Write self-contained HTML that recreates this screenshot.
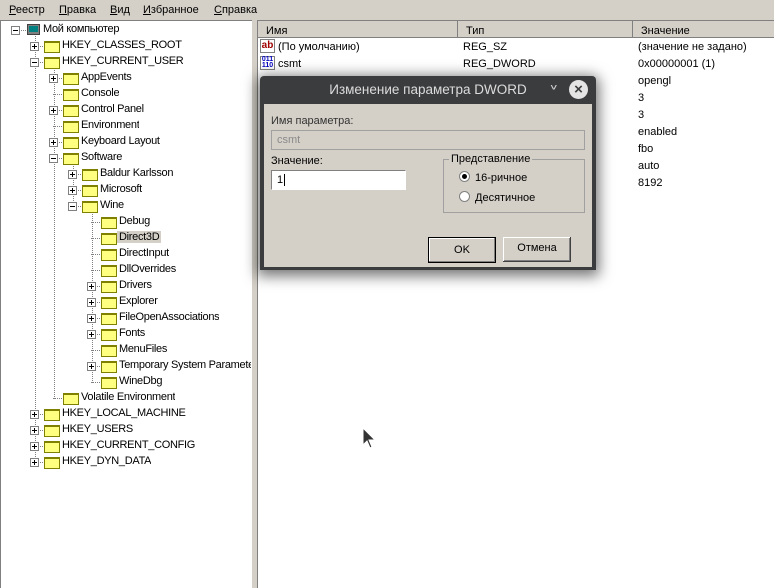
<!DOCTYPE html><html><head><meta charset="utf-8"><style>
*{margin:0;padding:0;box-sizing:border-box}
body{width:774px;height:588px;overflow:hidden;background:#d4d0c8;font-family:"Liberation Sans","DejaVu Sans",sans-serif;font-size:11px;color:#000;position:relative}
.a{position:absolute;white-space:nowrap}
.menu span{position:absolute;top:4px}
.menu u{text-decoration:underline}
#tree{position:absolute;left:0;top:20px;width:252px;height:568px;background:#fff;border-top:1px solid #808080;border-left:1px solid #808080;overflow:hidden}
#list{position:absolute;left:257px;top:20px;width:517px;height:568px;background:#fff;border-top:1px solid #808080;border-left:1px solid #808080;overflow:hidden}
.box{position:absolute;width:9px;height:9px;border:1px solid #808080;background:#fff}
.box:before{content:"";position:absolute;left:1px;top:3px;width:5px;height:1px;background:#000}
.box.p:after{content:"";position:absolute;left:3px;top:1px;width:1px;height:5px;background:#000}
.fold{position:absolute;width:16px;height:12px;background:#ffff80;border:1px solid #808000;border-top-width:2px}
.vl{position:absolute;border-left:1px dotted #808080;width:0}
.hl{position:absolute;border-top:1px dotted #808080;height:0}
.tt{font-size:11px;letter-spacing:-0.3px}
.hdr{position:absolute;top:0;height:17px;background:#d4d0c8;border-right:1px solid #808080;border-bottom:1px solid #808080;padding:4px 0 0 8px}
</style></head><body>
<div class="menu"><span style="left:9px"><u>Р</u>еестр</span><span style="left:59px"><u>П</u>равка</span><span style="left:110px"><u>В</u>ид</span><span style="left:143px"><u>И</u>збранное</span><span style="left:214px"><u>С</u>правка</span></div>
<div id="tree">
<div class="vl" style="left:34px;top:11px;height:431px"></div>
<div class="vl" style="left:53px;top:42px;height:336px"></div>
<div class="vl" style="left:72px;top:138px;height:48px"></div>
<div class="vl" style="left:91px;top:186px;height:176px"></div>
</div>
<div id="list">
<div class="hdr" style="left:0;width:200px">Имя</div>
<div class="hdr" style="left:200px;width:175px">Тип</div>
<div class="hdr" style="left:375px;width:142px">Значение</div>
</div>
<div class="a" style="left:252px;top:20px;width:5px;height:568px;background:#d4d0c8"></div>
<div id="T"></div>
<script>
var rows=[[0,'Мой компьютер','m'],[1,'HKEY_CLASSES_ROOT','p'],[1,'HKEY_CURRENT_USER','m'],[2,'AppEvents','p'],[2,'Console',''],[2,'Control Panel','p'],[2,'Environment',''],[2,'Keyboard Layout','p'],[2,'Software','m'],[3,'Baldur Karlsson','p'],[3,'Microsoft','p'],[3,'Wine','m'],[4,'Debug',''],[4,'Direct3D','s'],[4,'DirectInput',''],[4,'DllOverrides',''],[4,'Drivers','p'],[4,'Explorer','p'],[4,'FileOpenAssociations','p'],[4,'Fonts','p'],[4,'MenuFiles',''],[4,'Temporary System Parameters','p'],[4,'WineDbg',''],[2,'Volatile Environment',''],[1,'HKEY_LOCAL_MACHINE','p'],[1,'HKEY_USERS','p'],[1,'HKEY_CURRENT_CONFIG','p'],[1,'HKEY_DYN_DATA','p']];
var h='';rows.forEach(function(r,i){var y=23+i*16,L=r[0],bx=11+19*L,ix=bx+14,tx=ix+18;
if(L==0){bx=11;ix=26;tx=43;}
h+='<div class="hl" style="left:'+(bx+4)+'px;top:'+(y+7)+'px;width:11px"></div>';
if(r[2]=='p'||r[2]=='m')h+='<div class="box '+(r[2]=='p'?'p':'')+'" style="left:'+bx+'px;top:'+(y+3)+'px"></div>';
if(L==0)h+='<div class="a" style="left:27px;top:'+(y+1)+'px;width:13px;height:11px;background:#808080;border:1px solid #404040"><div style="margin:1px;height:6px;background:#008080"></div></div>';
else h+='<div class="fold" style="left:'+ix+'px;top:'+(y+2)+'px"></div>';
h+='<div class="a tt" style="left:'+tx+'px;top:'+(y)+'px;'+(r[2]=='s'?'background:#d4d0c8;padding:0 2px;margin-left:-2px;':'')+'max-width:'+(251-tx)+'px;overflow:hidden">'+r[1]+'</div>';});
var v=[['(По умолчанию)','REG_SZ','(значение не задано)'],['csmt','REG_DWORD','0x00000001 (1)'],['','','opengl'],['','','3'],['','','3'],['','','enabled'],['','','fbo'],['','','auto'],['','','8192']];
v.forEach(function(r,i){var y=41+i*17;h+='<div class="a" style="left:278px;top:'+y+'px">'+r[0]+'</div><div class="a" style="left:463px;top:'+y+'px">'+r[1]+'</div><div class="a" style="left:638px;top:'+y+'px">'+r[2]+'</div>';});
document.getElementById('T').innerHTML=h;
</script>
<div class="a" style="left:260px;top:39px;width:15px;height:14px;border:1px solid #808080;background:#fff;color:#a00000;font-weight:bold;font-size:10px;line-height:11px;text-align:center">ab</div>
<div class="a" style="left:260px;top:56px;width:15px;height:14px;border:1px solid #808080;background:#fff;color:#0000c0;font-weight:bold;font-size:7px;line-height:6px;text-align:center">011<br>110</div>
<div class="a" style="left:260px;top:76px;width:336px;height:194px;background:#3b3c3e;border-radius:4px 4px 0 0;box-shadow:0 3px 14px 3px rgba(0,0,0,0.55)"></div>
<div class="a" style="left:260px;top:82px;width:336px;text-align:center;color:#dcdcdc;font-size:13.5px">Изменение параметра DWORD</div>
<div class="a" style="left:549px;top:79px;color:#ccc;font-size:13px;transform:scaleY(.6)">∨</div>
<div class="a" style="left:569px;top:80px;width:19px;height:19px;border-radius:50%;background:#e4e4e4;color:#3b3c3e;font-size:15px;line-height:19px;text-align:center;font-weight:bold">×</div>
<div class="a" style="left:264px;top:104px;width:328px;height:163px;background:#d4d0c8"></div>
<div class="a" style="left:271px;top:115px;color:#333">Имя параметра:</div>
<div class="a" style="left:271px;top:130px;width:314px;height:20px;border:1px solid #a0a0a0;background:#d4d0c8;color:#8a8a8a;padding:3px 0 0 5px">csmt</div>
<div class="a" style="left:271px;top:155px">Значение:</div>
<div class="a" style="left:271px;top:170px;width:135px;height:20px;border:1px solid #808080;border-right-color:#fff;border-bottom-color:#fff;background:#fff;padding:3px 0 0 5px">1<span style="border-left:1px solid #000;margin-left:1px"></span></div>
<div class="a" style="left:443px;top:159px;width:142px;height:54px;border:1px solid #a0a0a0"></div>
<div class="a" style="left:449px;top:153px;background:#d4d0c8;padding:0 2px">Представление</div>
<div class="a" style="left:459px;top:171px;width:11px;height:11px;border-radius:50%;background:#fff;border:1px solid #808080"><div style="margin:2px;width:5px;height:5px;border-radius:50%;background:#000"></div></div>
<div class="a" style="left:475px;top:172px">16-ричное</div>
<div class="a" style="left:459px;top:191px;width:11px;height:11px;border-radius:50%;background:#fff;border:1px solid #808080"></div>
<div class="a" style="left:475px;top:192px">Десятичное</div>
<div class="a" style="left:428px;top:237px;width:68px;height:26px;border:1px solid #000;background:#d4d0c8;text-align:center;padding-top:6px;box-shadow:inset -1px -1px #808080,inset 1px 1px #fff">OK</div>
<div class="a" style="left:503px;top:237px;width:68px;height:25px;background:#d4d0c8;text-align:center;padding-top:5px;box-shadow:inset -1px -1px #404040,inset 1px 1px #fff,inset -2px -2px #808080">Отмена</div>
<svg class="a" style="left:362px;top:427px" width="14" height="22"><path d="M1 1 L1 18 L5 14 L8 21 L10 20 L7 13 L13 13 Z" fill="#333" stroke="#fff" stroke-width="1"/></svg>
</body></html>
